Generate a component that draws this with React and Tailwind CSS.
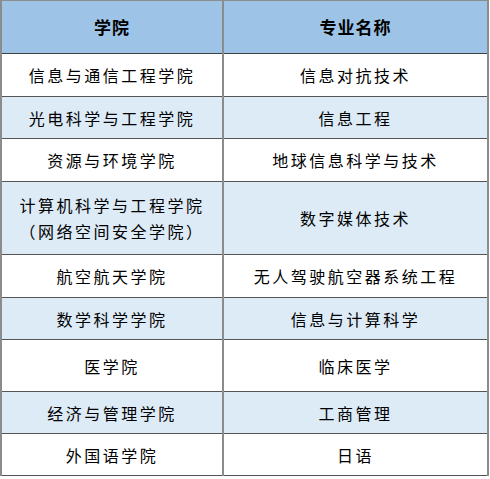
const rows = [
  { school: ["信息与通信工程学院"], major: "信息对抗技术", h: "h-[43px]" },
  { school: ["光电科学与工程学院"], major: "信息工程", h: "h-[42px]" },
  { school: ["资源与环境学院"], major: "地球信息科学与技术", h: "h-[43px]" },
  { school: ["计算机科学与工程学院", "（网络空间安全学院）"], major: "数字媒体技术", h: "h-[73px]" },
  { school: ["航空航天学院"], major: "无人驾驶航空器系统工程", h: "h-[43px]" },
  { school: ["数学科学学院"], major: "信息与计算科学", h: "h-[42px]" },
  { school: ["医学院"], major: "临床医学", h: "h-[52px]" },
  { school: ["经济与管理学院"], major: "工商管理", h: "h-[42px]" },
  { school: ["外国语学院"], major: "日语", h: "h-[42px]" },
];

export default function App() {
  return (
    <div className="w-[490px] h-[479px] bg-white font-['Noto_Sans_CJK_SC',sans-serif] text-black">
      <table className="w-[487px] border-collapse table-fixed">
        <colgroup>
          <col className="w-[222px]" />
          <col className="w-[265px]" />
        </colgroup>
        <thead>
          <tr className="h-[53px] bg-[#9dc3e6]">
            <th className="border-2 border-[#8c8c8c] border-b-[#3f3f3f] border-t border-b text-[17px] font-bold tracking-[1px] text-center">
              学院
            </th>
            <th className="border-2 border-[#8c8c8c] border-b-[#3f3f3f] border-t border-b text-[17px] font-bold tracking-[1px] text-center">
              专业名称
            </th>
          </tr>
        </thead>
        <tbody>
          {rows.map((r, i) => (
            <tr key={i} className={`${r.h} ${i % 2 === 1 ? "bg-[#ddebf7]" : "bg-white"}`}>
              <td className="border-2 border-[#8c8c8c] border-b-[#555555] border-t-[#555555] border-y text-[16px] tracking-[2.5px] leading-[26px] text-center">
                {r.school.map((s, j) => (
                  <div key={j}>{s}</div>
                ))}
              </td>
              <td className="border-2 border-[#8c8c8c] border-b-[#555555] border-t-[#555555] border-y text-[16px] tracking-[2.5px] text-center">
                {r.major}
              </td>
            </tr>
          ))}
        </tbody>
      </table>
    </div>
  );
}
